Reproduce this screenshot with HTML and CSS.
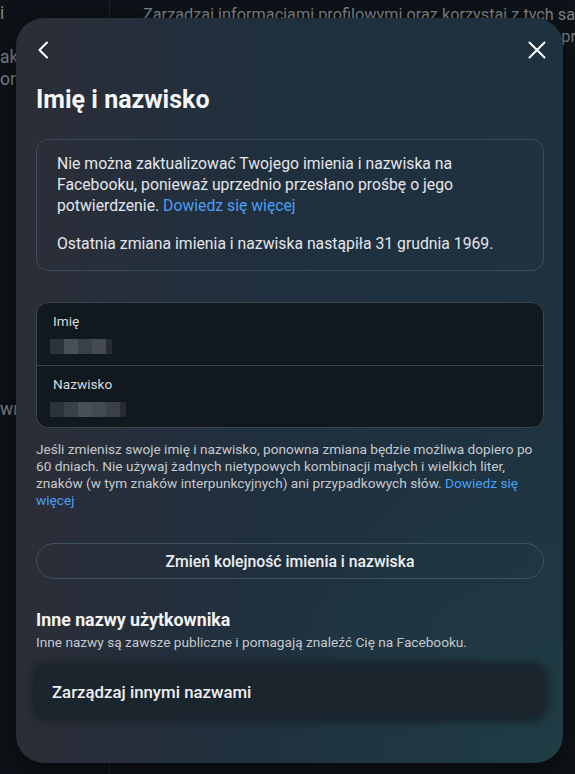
FILE: index.html
```html
<!DOCTYPE html>
<html lang="pl">
<head>
    <meta charset="UTF-8">
    <meta name="viewport" content="width=device-width, initial-scale=1.0">
    <title>Imię i nazwisko</title>
    <link rel="stylesheet" href="styles.css">
</head>
<body>
    <!-- page behind the dialog -->
    <div class="backdrop">
        <div class="side-col">
            <p class="side-item side-i">i</p>
            <p class="side-item side-ak">ak</p>
            <p class="side-item">on.</p>
            <p class="side-item side-wni">wni</p>
        </div>
        <div class="main-col">
            <p class="main-lead">Zarządzaj informacjami profilowymi oraz korzystaj z tych samych informacji<br>w produktach Meta, takich jak Facebook i Instagram, oraz przy logowaniu</p>
        </div>
    </div>

    <div class="dialog">
        <div class="dialog-head">
            <button class="icon-btn" aria-label="Wstecz">
                <svg width="24" height="24" viewBox="0 0 24 24"><path d="M15 4.5 7.5 12l7.5 7.5" fill="none" stroke="#fff" stroke-width="2" stroke-linecap="round" stroke-linejoin="round"/></svg>
            </button>
            <button class="icon-btn" aria-label="Zamknij">
                <svg width="24" height="24" viewBox="0 0 24 24"><path d="M4.5 4.5l15 15M19.5 4.5l-15 15" fill="none" stroke="#fff" stroke-width="2" stroke-linecap="round"/></svg>
            </button>
        </div>

        <h1 class="dialog-title">Imię i nazwisko</h1>

        <div class="notice">
            <p>Nie można zaktualizować Twojego imienia i nazwiska na Facebooku, ponieważ uprzednio przesłano prośbę o jego potwierdzenie. <a href="#">Dowiedz się więcej</a></p>
            <p>Ostatnia zmiana imienia i nazwiska nastąpiła 31 grudnia 1969.</p>
        </div>

        <div class="fields">
            <div class="field">
                <span class="field-label">Imię</span>
                <span class="blur-val">
                    <i class="px1"></i><i class="px2"></i><i class="px3"></i><i class="px4"></i><i class="px5"></i>
                </span>
            </div>
            <div class="field">
                <span class="field-label">Nazwisko</span>
                <span class="blur-val">
                    <i class="px1"></i><i class="px3"></i><i class="px2"></i><i class="px4"></i><i class="px3"></i><i class="px5"></i>
                </span>
            </div>
        </div>

        <p class="hint">Jeśli zmienisz swoje imię i nazwisko, ponowna zmiana będzie możliwa dopiero po 60 dniach. Nie używaj żadnych nietypowych kombinacji małych i wielkich liter, znaków (w tym znaków interpunkcyjnych) ani przypadkowych słów. <a href="#">Dowiedz się więcej</a></p>

        <button class="pill-btn">Zmień kolejność imienia i nazwiska</button>

        <h2 class="section-title">Inne nazwy użytkownika</h2>
        <p class="section-sub">Inne nazwy są zawsze publiczne i pomagają znaleźć Cię na Facebooku.</p>

        <div class="link-card">Zarządzaj innymi nazwami</div>
    </div>
</body>
</html>
```

FILE: styles.css
```css
* {
    box-sizing: border-box;
}
body {
    margin: 0;
    height: 774px;
    overflow: hidden;
    background-color: #0d1318;
    font-family: Roboto, "Liberation Sans", sans-serif;
    color: #e4e6eb;
    position: relative;
}
p {
    margin: 0;
}
a {
    color: #4a9ff5;
    text-decoration: none;
}

/* page behind */
.backdrop {
    display: flex;
    height: 100%;
    color: #7d8287;
    font-size: 16.3px;
}
.side-col {
    width: 110px;
    border-right: 1px solid #1c2329;
    padding-top: 2px;
    font-size: 17.5px;
}
.side-item {
    line-height: 22px;
}
.side-ak {
    margin-top: 22px;
}
.side-wni {
    margin-top: 308px;
}
.main-col {
    flex: 1;
    padding: 4px 0 0 33px;
    overflow: hidden;
}
.main-lead {
    width: 900px;
    line-height: 22px;
    white-space: nowrap;
}

/* dialog */
.dialog {
    position: absolute;
    left: 16px;
    top: 18px;
    width: 547px;
    height: 745px;
    border-radius: 28px;
    padding: 20px 19px 0 20px;
    background:
        radial-gradient(ellipse 70% 50% at 100% 100%, rgba(32, 70, 72, 0.55), transparent),
        linear-gradient(90deg, #2c2d37 0%, #252f3b 22%, #1f2f3e 50%, #1f3240 100%);
    box-shadow: 0 6px 24px rgba(0, 0, 0, 0.5);
}
.dialog-head {
    display: flex;
    justify-content: space-between;
    margin: 0 -5px 0 -4px;
}
.icon-btn {
    width: 24px;
    height: 24px;
    padding: 0;
    border: none;
    background: none;
    display: flex;
}
.dialog-title {
    margin: 23px 0 24px;
    font-size: 25px;
    line-height: 30px;
    font-weight: 700;
    color: #f5f6f7;
}

.notice {
    border: 1px solid #3a4b59;
    border-radius: 12px;
    padding: 13px 20px 16px;
    font-size: 15.75px;
    line-height: 21px;
}
.notice p + p {
    margin-top: 17px;
}

.fields {
    margin-top: 31px;
    background-color: #11181e;
    border: 1px solid #38444e;
    border-radius: 12px;
}
.field {
    display: flex;
    flex-direction: column;
    padding: 10px 16px 13px 13px;
    height: 62px;
}
.field + .field {
    border-top: 1px solid #36424c;
}
.field-label {
    font-size: 13.65px;
    line-height: 16px;
    padding-left: 3px;
    color: #d8dadd;
}
.blur-val {
    display: flex;
    margin-top: 10px;
    height: 15px;
}
.blur-val i {
    width: 14px;
    height: 15px;
}
.px1 { background-color: #2c333a; }
.px2 { background-color: #4a5057; }
.px3 { background-color: #3a4047; }
.px4 { background-color: #444a51; }
.px5 { background-color: #262c32; width: 6px !important; }

.hint {
    margin-top: 13px;
    font-size: 13.65px;
    line-height: 17px;
    color: #c5c9cd;
}

.pill-btn {
    display: block;
    width: 100%;
    margin-top: 34px;
    height: 36px;
    border: 1px solid #3f5260;
    border-radius: 18px;
    background: transparent;
    font-family: inherit;
    font-size: 15.75px;
    font-weight: 500;
    color: #eef0f2;
}

.section-title {
    margin: 30px 0 0;
    font-size: 17.8px;
    line-height: 22px;
    font-weight: 700;
    color: #f2f3f5;
}
.section-sub {
    margin-top: 3px;
    font-size: 13.65px;
    line-height: 17px;
    color: #c5c9cd;
}

.link-card {
    margin-top: 16px;
    height: 50px;
    padding: 0 16px;
    display: flex;
    align-items: center;
    font-size: 16.8px;
    font-weight: 500;
    color: #eef0f2;
    background-color: #1b252e;
    border-radius: 12px;
    box-shadow: 0 0 10px 4px rgba(22, 30, 38, 0.9);
}
```
